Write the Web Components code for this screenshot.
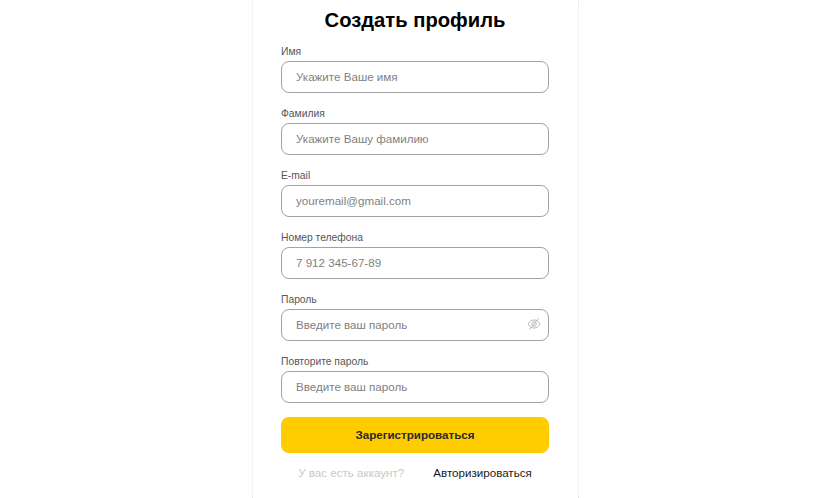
<!DOCTYPE html>
<html lang="ru">
<head>
<meta charset="utf-8">
<title>Создать профиль</title>
<style>
  html, body { margin: 0; height: 100%; background: #fff; overflow: hidden; }
  body { font-family: 'Liberation Sans', Arial, sans-serif; }
</style>
</head>
<body>
<signup-card>
  <h-title slot="title">Создать профиль</h-title>
  <form-field label="Имя" placeholder="Укажите Ваше имя"></form-field>
  <form-field label="Фамилия" placeholder="Укажите Вашу фамилию"></form-field>
  <form-field label="E-mail" placeholder="youremail@gmail.com"></form-field>
  <form-field label="Номер телефона" placeholder="7 912 345-67-89"></form-field>
  <form-field label="Пароль" placeholder="Введите ваш пароль" eye></form-field>
  <form-field label="Повторите пароль" placeholder="Введите ваш пароль"></form-field>
  <submit-button slot="actions">Зарегистрироваться</submit-button>
  <login-hint slot="actions" question="У вас есть аккаунт?" action="Авторизироваться"></login-hint>
</signup-card>

<script>
  class SignupCard extends HTMLElement {
    constructor() {
      super();
      this.attachShadow( {mode: 'open'} ).innerHTML = /* template */ `
        <style>
          :host {
            box-sizing: border-box;
            display: block;
            width: 327px;
            height: 498px;
            margin: 0 0 0 252px;
            padding: 0 29px 0 28px;
            border-left: dotted 1px #eaeaee;
            border-right: dotted 1px #e3e3ea;
          }

          .title {
            display: block;
            height: 45px;
          }

          .fields {
            display: flex;
            flex-direction: column;
            gap: 14px;
          }

          .actions {
            display: block;
            margin-top: 14px;
          }
        </style>
        <div class="title"><slot name="title"></slot></div>
        <div class="fields"><slot></slot></div>
        <div class="actions"><slot name="actions"></slot></div>
      `;
    }
  }

  class HTitle extends HTMLElement {
    constructor() {
      super();
      this.attachShadow( {mode: 'open'} ).innerHTML = /* template */ `
        <style>
          :host {
            display: block;
            color: #000;
            font-size: 20.2px;
            font-weight: 700;
            line-height: 26px;
            padding-top: 7px;
            text-align: center;
          }
        </style>
        <slot></slot>
      `;
    }
  }

  class FormField extends HTMLElement {
    constructor() {
      super();
      const eye = this.hasAttribute( 'eye' ) ? `
        <svg viewBox="0 0 14 14" width="14" height="14" fill="none" stroke="#b8b8b8" stroke-width="1">
          <path d="M1 7c1.600-2.700 3.600-4 6-4s4.400 1.300 6 4c-1.600 2.700-3.600 4-6 4s-4.400-1.300-6-4z"/>
          <circle cx="7" cy="7" r="2.200"/>
          <path d="M2.500 12.500 11.500 1.500"/>
        </svg>` : '';
      this.attachShadow( {mode: 'open'} ).innerHTML = /* template */ `
        <style>
          :host {
            display: block;
          }

          label {
            color: #555;
            display: block;
            font-size: 10.3px;
            height: 16px;
            line-height: 13px;
          }

          .box {
            align-items: center;
            border: solid 1px #a2a2a6;
            border-radius: 8px;
            box-sizing: border-box;
            color: #7f7f7f;
            display: flex;
            font-size: 11.6px;
            height: 32px;
            justify-content: space-between;
            padding: 0 7px 2px 14px;
          }

          svg {
            display: block;
          }
        </style>
        <label>${this.getAttribute( 'label' )}</label>
        <div class="box"><span>${this.getAttribute( 'placeholder' )}</span>${eye}</div>
      `;
    }
  }

  class SubmitButton extends HTMLElement {
    constructor() {
      super();
      this.attachShadow( {mode: 'open'} ).innerHTML = /* template */ `
        <style>
          :host {
            align-items: center;
            background: #ffcc00;
            border-radius: 8px;
            box-sizing: border-box;
            color: #2a2a2a;
            display: flex;
            font-size: 11.6px;
            font-weight: 700;
            height: 36px;
            justify-content: center;
            padding-bottom: 2px;
          }
        </style>
        <slot></slot>
      `;
    }
  }

  class LoginHint extends HTMLElement {
    constructor() {
      super();
      this.attachShadow( {mode: 'open'} ).innerHTML = /* template */ `
        <style>
          :host {
            display: flex;
            font-size: 11.6px;
            gap: 29px;
            justify-content: center;
            line-height: 14px;
            margin-top: 13px;
          }

          .question {
            color: #c8c8c8;
          }

          .action {
            color: #1a1a1a;
          }
        </style>
        <span class="question">${this.getAttribute( 'question' )}</span>
        <span class="action">${this.getAttribute( 'action' )}</span>
      `;
    }
  }

  window.customElements.define( 'signup-card', SignupCard );
  window.customElements.define( 'h-title', HTitle );
  window.customElements.define( 'form-field', FormField );
  window.customElements.define( 'submit-button', SubmitButton );
  window.customElements.define( 'login-hint', LoginHint );
</script>
</body>
</html>
